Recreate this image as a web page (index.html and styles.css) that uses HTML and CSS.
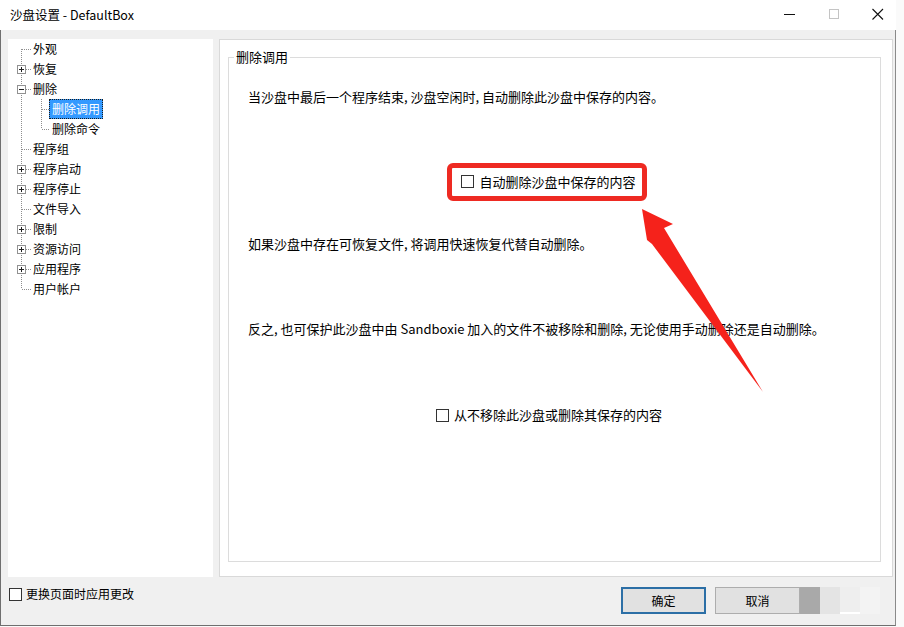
FILE: index.html
```html
<!DOCTYPE html>
<html lang="zh-CN">
<head>
    <meta charset="UTF-8">
    <meta name="viewport" content="width=device-width, initial-scale=1.0">
    <title>沙盘设置 - DefaultBox</title>
    <link rel="stylesheet" href="styles.css">
</head>
<body>
    <div class="window">
        <div class="titlebar">
            <span class="title">沙盘设置 - DefaultBox</span>
            <div class="controls">
                <svg class="ctl" width="16" height="16" viewBox="0 0 16 16"><path d="M2 8.5H13" stroke="#111" stroke-width="1"/></svg>
                <svg class="ctl" width="16" height="16" viewBox="0 0 16 16"><rect x="3.5" y="3.5" width="9" height="9" fill="none" stroke="#c4c4c4"/></svg>
                <svg class="ctl" width="16" height="16" viewBox="0 0 16 16"><path d="M2.5 3L13 13.5M13 3L2.5 13.5" stroke="#111" stroke-width="1.1"/></svg>
            </div>
        </div>

        <div class="frame">
            <div class="main">
                <!-- page tree -->
                <div class="tree">
                    <div class="node"><span class="gutter g-first"></span><span class="label">外观</span></div>
                    <div class="node"><span class="gutter g-mid"><svg class="toggle" width="9" height="9" viewBox="0 0 9 9"><rect x="0.5" y="0.5" width="8" height="8" fill="#fff" stroke="#919191"/><path d="M2 4.5H7M4.5 2V7" stroke="#222"/></svg></span><span class="label">恢复</span></div>
                    <div class="node"><span class="gutter g-mid"><svg class="toggle" width="9" height="9" viewBox="0 0 9 9"><rect x="0.5" y="0.5" width="8" height="8" fill="#fff" stroke="#919191"/><path d="M2 4.5H7" stroke="#222"/></svg></span><span class="label">删除</span></div>
                    <div class="node"><span class="gutter g-child"></span><span class="label selected">删除调用</span></div>
                    <div class="node"><span class="gutter g-child-last"></span><span class="label">删除命令</span></div>
                    <div class="node"><span class="gutter g-mid"></span><span class="label">程序组</span></div>
                    <div class="node"><span class="gutter g-mid"><svg class="toggle" width="9" height="9" viewBox="0 0 9 9"><rect x="0.5" y="0.5" width="8" height="8" fill="#fff" stroke="#919191"/><path d="M2 4.5H7M4.5 2V7" stroke="#222"/></svg></span><span class="label">程序启动</span></div>
                    <div class="node"><span class="gutter g-mid"><svg class="toggle" width="9" height="9" viewBox="0 0 9 9"><rect x="0.5" y="0.5" width="8" height="8" fill="#fff" stroke="#919191"/><path d="M2 4.5H7M4.5 2V7" stroke="#222"/></svg></span><span class="label">程序停止</span></div>
                    <div class="node"><span class="gutter g-mid"></span><span class="label">文件导入</span></div>
                    <div class="node"><span class="gutter g-mid"><svg class="toggle" width="9" height="9" viewBox="0 0 9 9"><rect x="0.5" y="0.5" width="8" height="8" fill="#fff" stroke="#919191"/><path d="M2 4.5H7M4.5 2V7" stroke="#222"/></svg></span><span class="label">限制</span></div>
                    <div class="node"><span class="gutter g-mid"><svg class="toggle" width="9" height="9" viewBox="0 0 9 9"><rect x="0.5" y="0.5" width="8" height="8" fill="#fff" stroke="#919191"/><path d="M2 4.5H7M4.5 2V7" stroke="#222"/></svg></span><span class="label">资源访问</span></div>
                    <div class="node"><span class="gutter g-mid"><svg class="toggle" width="9" height="9" viewBox="0 0 9 9"><rect x="0.5" y="0.5" width="8" height="8" fill="#fff" stroke="#919191"/><path d="M2 4.5H7M4.5 2V7" stroke="#222"/></svg></span><span class="label">应用程序</span></div>
                    <div class="node"><span class="gutter g-last"></span><span class="label">用户帐户</span></div>
                </div>

                <!-- settings page -->
                <div class="panel">
                    <div class="group">
                        <span class="group-title">删除调用</span>
                        <p class="note first">当沙盘中最后一个程序结束, 沙盘空闲时, 自动删除此沙盘中保存的内容。</p>
                        <div class="option-row">
                            <span class="marked">
                                <label class="check"><span class="box"></span>自动删除沙盘中保存的内容</label>
                            </span>
                        </div>
                        <p class="note second">如果沙盘中存在可恢复文件, 将调用快速恢复代替自动删除。</p>
                        <p class="note third">反之, 也可保护此沙盘中由 Sandboxie 加入的文件不被移除和删除, 无论使用手动删除还是自动删除。</p>
                        <div class="option-row last">
                            <label class="check"><span class="box"></span>从不移除此沙盘或删除其保存的内容</label>
                        </div>

                        <svg class="arrow" width="145" height="200" viewBox="630 200 145 200">
                            <polygon points="642,209 673,224 664,228 763,392 652,244 647,240" fill="#f5221b"/>
                        </svg>
                    </div>
                </div>
            </div>

            <div class="footer">
                <label class="check small"><span class="box"></span>更换页面时应用更改</label>
                <div class="buttons">
                    <button class="button default">确定</button>
                    <button class="button">取消</button>
                    <div class="smudge">
                        <span class="s1"></span>
                        <span class="s2"></span>
                        <span class="s3"></span>
                        <span class="s4"></span>
                    </div>
                </div>
            </div>
        </div>
    </div>
</body>
</html>
```

FILE: styles.css
```css
* {
    margin: 0;
    padding: 0;
    box-sizing: border-box;
}

body {
    width: 904px;
    height: 627px;
    background-color: #fafafa;
    font-family: "Noto Sans CJK SC", "Noto Sans", sans-serif;
    color: #000;
    overflow: hidden;
}

.window {
    width: 896px;
}

/* title bar */
.titlebar {
    height: 30px;
    background-color: #fff;
    display: flex;
    align-items: center;
    justify-content: space-between;
    padding-left: 10px;
}

.title {
    font-size: 12.5px;
    line-height: 16px;
}

.controls {
    display: flex;
    gap: 28px;
    margin-right: 10px;
    margin-top: -2px;
}

.ctl {
    display: block;
}

/* window body */
.frame {
    height: 596px;
    background-color: #f0f0f0;
    border-left: 1px solid #6f6f6f;
    border-right: 1px solid #8a8a8a;
    border-bottom: 1px solid #6f6f6f;
    padding: 9px 1px 0 7px;
}

.main {
    display: flex;
    gap: 6px;
    height: 538px;
}

/* tree */
.tree {
    width: 205px;
    background-color: #fff;
    font-size: 12px;
}

.node {
    display: flex;
    align-items: center;
    height: 20px;
}

.gutter {
    flex: none;
    width: 23px;
    height: 20px;
    display: flex;
    align-items: center;
    background-repeat: no-repeat;
}

.g-mid,
.g-first,
.g-last {
    background-image:
        repeating-linear-gradient(to bottom, #8e8e8e 0 1px, transparent 1px 2px),
        repeating-linear-gradient(to right, #8e8e8e 0 1px, transparent 1px 2px);
    background-position: 13px 0, 14px 10px;
    background-size: 1px 20px, 9px 1px;
}

.g-first {
    background-position: 13px 10px, 14px 10px;
    background-size: 1px 10px, 9px 1px;
}

.g-last {
    background-size: 1px 10px, 9px 1px;
}

.g-child,
.g-child-last {
    width: 42px;
    background-image:
        repeating-linear-gradient(to bottom, #8e8e8e 0 1px, transparent 1px 2px),
        repeating-linear-gradient(to bottom, #8e8e8e 0 1px, transparent 1px 2px),
        repeating-linear-gradient(to right, #8e8e8e 0 1px, transparent 1px 2px);
    background-position: 13px 0, 33px 0, 34px 10px;
    background-size: 1px 20px, 1px 20px, 8px 1px;
}

.g-child-last {
    background-size: 1px 20px, 1px 10px, 8px 1px;
}

.toggle {
    display: block;
    margin-left: 9px;
}

.label {
    padding: 0 2px;
    line-height: 18px;
    border: 1px solid transparent;
    margin-left: -1px;
}

.label.selected {
    background-color: #3399ff;
    color: #fff;
    border: 1px dotted #1b1b1b;
}

/* right side */
.panel {
    width: 674px;
    background-color: #fff;
    border: 1px solid #d9d9d9;
    padding: 17px 11px 14px 8px;
    display: flex;
}

.group {
    position: relative;
    flex: 1;
    border: 1px solid #dcdcdc;
    padding: 0 30px 0 19px;
    font-size: 13px;
}

.group-title {
    position: absolute;
    top: -9px;
    left: 5px;
    padding: 0 2px;
    background-color: #fff;
    line-height: 16px;
}

.note {
    line-height: 20px;
    white-space: nowrap;
}

.note.first {
    margin-top: 29px;
}

.note.second {
    margin-top: 33px;
}

.note.third {
    margin-top: 65px;
}

.option-row {
    text-align: center;
    margin-top: 56px;
}

.option-row.last {
    margin-top: 66px;
    line-height: 20px;
}

.marked {
    display: inline-block;
    margin-right: 4px;
    border: 5px solid #ee2a22;
    border-radius: 6px;
    padding: 5px 6px 5px 9px;
    line-height: 17px;
}

.check {
    display: inline-flex;
    align-items: center;
    gap: 5px;
}

.box {
    width: 13px;
    height: 13px;
    border: 1px solid #333;
    background-color: #fff;
    flex: none;
}

.arrow {
    position: absolute;
    left: 401px;
    top: 142px;
}

/* footer */
.footer {
    display: flex;
    justify-content: space-between;
    align-items: flex-start;
    padding-top: 10px;
}

.check.small {
    font-size: 12px;
    line-height: 14px;
    gap: 4px;
    margin-left: 1px;
}

.buttons {
    display: flex;
    gap: 9px;
    margin-right: 14px;
}

.button {
    width: 85px;
    height: 27px;
    font-family: inherit;
    font-size: 12px;
    background-color: #e1e1e1;
    border: 1px solid #adadad;
    color: #000;
}

.button.default {
    border: 2px solid #2c6fa6;
}

.smudge {
    display: flex;
    height: 27px;
    margin-left: -9px;
}

.smudge span {
    width: 20px;
    height: 100%;
}

.smudge .s1 {
    background-color: #a9a9a9;
}

.smudge .s2 {
    background-color: #e4e4e4;
}

.smudge .s3 {
    background-color: #eeeeee;
    border-bottom: 2px solid #fff;
}

.smudge .s4 {
    background-color: #f3f3f3;
}
```
